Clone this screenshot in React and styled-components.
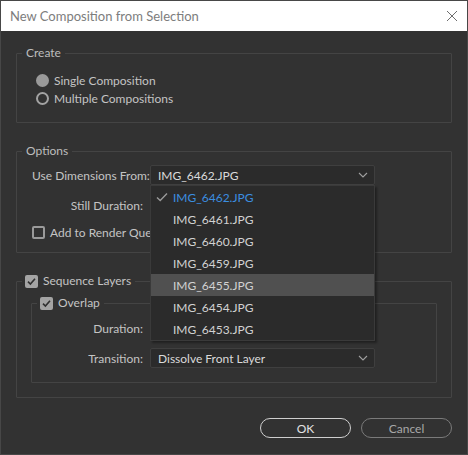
import styled, { createGlobalStyle } from 'styled-components';

const GlobalStyle = createGlobalStyle`
  html, body {
    margin: 0;
    padding: 0;
    background: #1f1f1f;
  }
  body {
    font-family: Lato, "Noto Sans", sans-serif;
    font-size: 12px;
  }
`;

const files = [
  'IMG_6462.JPG',
  'IMG_6461.JPG',
  'IMG_6460.JPG',
  'IMG_6459.JPG',
  'IMG_6455.JPG',
  'IMG_6454.JPG',
  'IMG_6453.JPG',
];

export default function App() {
  return (
    <>
      <GlobalStyle />
      <Dialog>
        <TitleBar>
          <Title>New Composition from Selection</Title>
          <CloseButton aria-label="Close">
            <svg width="12" height="12" viewBox="0 0 12 12">
              <path d="M1 1L11 11M11 1L1 11" stroke="#6e6e6e" strokeWidth="1" />
            </svg>
          </CloseButton>
        </TitleBar>

        <Body>
          <Group>
            <Legend>Create</Legend>
            <RadioList>
              <RadioRow>
                <Radio $checked />
                Single Composition
              </RadioRow>
              <RadioRow>
                <Radio />
                Multiple Compositions
              </RadioRow>
            </RadioList>
          </Group>

          <Group $gap={20}>
            <Legend>Options</Legend>
            <Form $pad="6px 0 10px 15px">
              <FieldRow>
                <Label>Use Dimensions From:</Label>
                <SelectWrap>
                  <Select>
                    IMG_6462.JPG
                    <Chevron />
                  </Select>
                  <Menu>
                    {files.map((f, i) => (
                      <MenuItem key={f} $active={i === 4} $selected={i === 0}>
                        {i === 0 && (
                          <Check width="12" height="10" viewBox="0 0 12 10">
                            <path d="M1 5.5L4.2 8.5L11 1.5" fill="none" stroke="#9a9a9a" strokeWidth="1.4" />
                          </Check>
                        )}
                        {f}
                      </MenuItem>
                    ))}
                  </Menu>
                </SelectWrap>
              </FieldRow>
              <FieldRow $top={10}>
                <Label>Still Duration:</Label>
              </FieldRow>
              <CheckRow $top={7}>
                <CheckBox />
                Add to Render Queue
              </CheckRow>
            </Form>
          </Group>

          <Group $gap={20}>
            <Legend>
              <LegendCheck>
                <CheckBox $checked />
                Sequence Layers
              </LegendCheck>
            </Legend>
            <Inner>
              <Group $gap={0}>
                <Legend>
                  <LegendCheck>
                    <CheckBox $checked />
                    Overlap
                  </LegendCheck>
                </Legend>
                <Form $pad="7px 0 14px 0" $labelWidth={111}>
                  <FieldRow>
                    <Label>Duration:</Label>
                  </FieldRow>
                  <FieldRow $top={10}>
                    <Label>Transition:</Label>
                    <Select>
                      Dissolve Front Layer
                      <Chevron />
                    </Select>
                  </FieldRow>
                </Form>
              </Group>
            </Inner>
          </Group>

          <Buttons>
            <Button $primary>OK</Button>
            <Button>Cancel</Button>
          </Buttons>
        </Body>
      </Dialog>
    </>
  );
}

function Chevron() {
  return (
    <ChevronIcon width="10" height="6" viewBox="0 0 10 6">
      <path d="M1 1L5 5L9 1" fill="none" stroke="#a0a0a0" strokeWidth="1.1" />
    </ChevronIcon>
  );
}

const Dialog = styled.div`
  width: 466px;
  height: 453px;
  border: 1px solid #474747;
  background: #323232;
  display: flex;
  flex-direction: column;
  overflow: hidden;
`;

const TitleBar = styled.div`
  height: 30px;
  background: #ffffff;
  display: flex;
  align-items: center;
  justify-content: space-between;
  padding: 0 9px 0 9px;
  flex-shrink: 0;
`;

const Title = styled.span`
  color: #7d7d7d;
  font-size: 13px;
`;

const CloseButton = styled.button`
  border: none;
  background: transparent;
  padding: 0;
  width: 12px;
  height: 12px;
  display: flex;
`;

const Body = styled.div`
  padding: 14px 15px 0 15px;
  color: #c4c4c4;
  white-space: nowrap;
`;

const Group = styled.fieldset`
  margin: ${(p) => p.$gap ?? 0}px 0 0 0;
  padding: 0;
  border: 1px solid #444444;
  border-radius: 1px;
  min-width: 0;
`;

const Legend = styled.legend`
  margin-left: 5px;
  padding: 0 4px;
  line-height: 16px;
  color: #bdbdbd;
`;

const LegendCheck = styled.span`
  display: flex;
  align-items: center;
  gap: 5px;
  color: #c4c4c4;
  margin-left: -1px;
`;

const RadioList = styled.div`
  display: flex;
  flex-direction: column;
  padding: 10px 0 15px 19px;
`;

const RadioRow = styled.label`
  display: flex;
  align-items: center;
  gap: 5px;
  height: 18px;
  color: #c4c4c4;
`;

const Radio = styled.span`
  width: 13px;
  height: 13px;
  border-radius: 50%;
  box-sizing: border-box;
  border: 2px solid #a3a3a3;
  background: ${(p) => (p.$checked ? '#9a9a9a' : 'transparent')};
  ${(p) => p.$checked && 'border-color: #9a9a9a;'}
`;

const Form = styled.div`
  display: flex;
  flex-direction: column;
  padding: ${(p) => p.$pad};
  --label-width: ${(p) => p.$labelWidth ?? 111}px;
`;

const FieldRow = styled.div`
  display: flex;
  align-items: center;
  gap: 7px;
  height: 20px;
  margin-top: ${(p) => p.$top ?? 0}px;
`;

const Label = styled.span`
  width: var(--label-width);
  text-align: right;
  flex-shrink: 0;
  color: #c4c4c4;
`;

const CheckRow = styled.label`
  display: flex;
  align-items: center;
  gap: 5px;
  height: 20px;
  margin-top: ${(p) => p.$top ?? 0}px;
  color: #c4c4c4;
`;

const CheckBox = styled.span`
  width: 13px;
  height: 13px;
  box-sizing: border-box;
  border-radius: 2px;
  flex-shrink: 0;
  border: 2px solid ${(p) => (p.$checked ? '#a4a4a4' : '#9a9a9a')};
  background: ${(p) =>
    p.$checked
      ? `#a4a4a4 url("data:image/svg+xml,%3Csvg xmlns='http://www.w3.org/2000/svg' width='9' height='9' viewBox='0 0 9 9'%3E%3Cpath d='M1 4.6L3.4 7L8 1.8' fill='none' stroke='%23303030' stroke-width='1.6'/%3E%3C/svg%3E") center / 9px 9px no-repeat`
      : 'transparent'};
`;

const SelectWrap = styled.div`
  position: relative;
`;

const Select = styled.div`
  width: 225px;
  height: 20px;
  box-sizing: border-box;
  border: 1px solid #3f3f3f;
  border-radius: 2px;
  background: #2b2b2b;
  color: #dadada;
  display: flex;
  align-items: center;
  justify-content: space-between;
  padding: 0 6px 0 7px;
`;

const ChevronIcon = styled.svg`
  flex-shrink: 0;
`;

const Menu = styled.div`
  position: absolute;
  top: 100%;
  left: 0;
  width: 225px;
  box-sizing: border-box;
  background: #2b2b2b;
  border: 1px solid #3a3a3a;
  box-shadow: 2px 2px 2px rgba(0, 0, 0, 0.35);
  z-index: 2;
`;

const MenuItem = styled.div`
  position: relative;
  height: 22px;
  display: flex;
  align-items: center;
  padding-left: 22px;
  background: ${(p) => (p.$active ? '#505050' : 'transparent')};
  color: ${(p) => (p.$selected ? '#3b8ee0' : '#d2d2d2')};
`;

const Check = styled.svg`
  position: absolute;
  left: 5px;
  top: 6px;
`;

const Inner = styled.div`
  padding: 6px 14px 14px 14px;
`;

const Buttons = styled.div`
  display: flex;
  justify-content: flex-end;
  gap: 10px;
  margin-top: 20px;
`;

const Button = styled.button`
  width: 91px;
  height: 20px;
  border-radius: 10px;
  background: transparent;
  font-family: inherit;
  font-size: 12px;
  padding: 0;
  border: 1.5px solid ${(p) => (p.$primary ? '#cfcfcf' : '#7a7a7a')};
  color: ${(p) => (p.$primary ? '#e2e2e2' : '#a8a8a8')};
`;
